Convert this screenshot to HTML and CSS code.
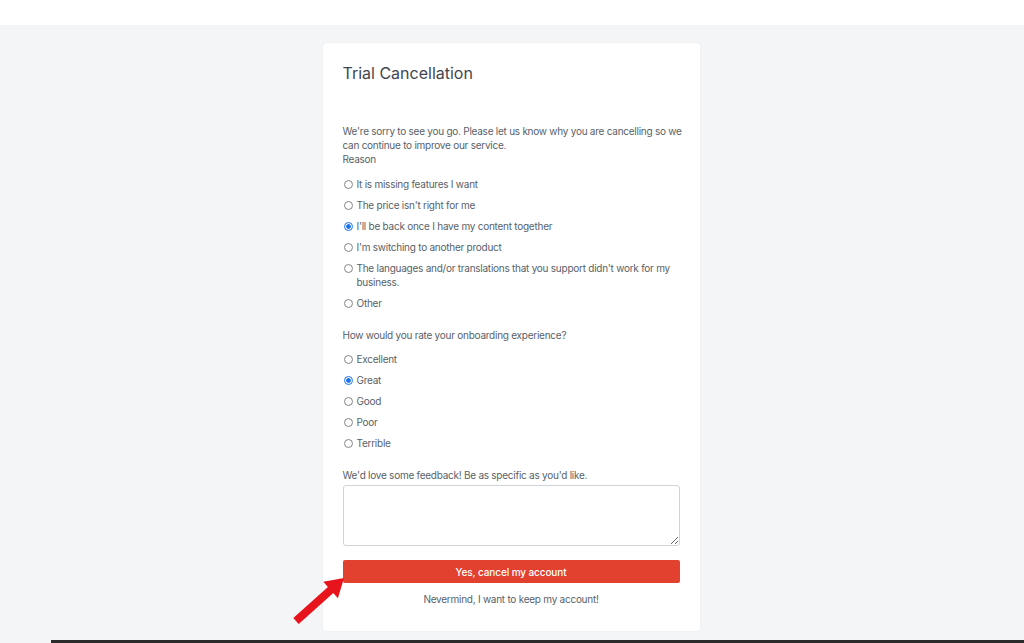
FILE: index.html
```html
<!DOCTYPE html>
<html lang="en">

<head>
    <meta charset="UTF-8">
    <meta name="viewport" content="width=device-width, initial-scale=1.0">
    <title>Trial Cancellation</title>
    <link rel="stylesheet" href="styles.css">
</head>

<body>
    <div class="topbar"></div>

    <div class="page">
        <form class="card">
            <h1 class="title">Trial Cancellation</h1>

            <p class="intro">We're sorry to see you go. Please let us know why you are cancelling so we can continue to improve our service.<br>Reason</p>

            <ul class="options first">
                <li><label><input type="radio" name="reason"><span>It is missing features I want</span></label></li>
                <li><label><input type="radio" name="reason"><span>The price isn't right for me</span></label></li>
                <li><label><input type="radio" name="reason" checked><span>I'll be back once I have my content together</span></label></li>
                <li><label><input type="radio" name="reason"><span>I'm switching to another product</span></label></li>
                <li><label><input type="radio" name="reason"><span>The languages and/or translations that you support didn't work for my business.</span></label></li>
                <li><label><input type="radio" name="reason"><span>Other</span></label></li>
            </ul>

            <p class="question">How would you rate your onboarding experience?</p>

            <ul class="options">
                <li><label><input type="radio" name="rating"><span>Excellent</span></label></li>
                <li><label><input type="radio" name="rating" checked><span>Great</span></label></li>
                <li><label><input type="radio" name="rating"><span>Good</span></label></li>
                <li><label><input type="radio" name="rating"><span>Poor</span></label></li>
                <li><label><input type="radio" name="rating"><span>Terrible</span></label></li>
            </ul>

            <p class="question">We'd love some feedback! Be as specific as you'd like.</p>
            <textarea class="feedback"></textarea>

            <button type="button" class="btn-cancel">Yes, cancel my account</button>
            <a href="#" class="keep">Nevermind, I want to keep my account!</a>
        </form>
    </div>

    <div class="bottombar"></div>

    <!-- annotation arrow -->
    <svg class="arrow" width="58" height="54" viewBox="0 0 58 54">
        <polygon points="54,4 47.9,24.2 43.3,19 8.7,50 3.3,44 37.9,13 33.3,7.8" fill="#e8141c" />
    </svg>
</body>

</html>
```

FILE: styles.css
```css
* {
    margin: 0;
    padding: 0;
    box-sizing: border-box;
}

ul {
    list-style: none;
}

html,
body {
    height: 100%;
}

body {
    position: relative;
    display: flex;
    flex-direction: column;
    background: #f4f5f7;
    font-family: Inter, "Liberation Sans", Arial, sans-serif;
    font-size: 10px;
    letter-spacing: -0.25px;
    line-height: 14px;
    color: #585f69;
    overflow: hidden;
}

.topbar {
    height: 25px;
    background: #fff;
    flex-shrink: 0;
}

.page {
    flex: 1;
    display: flex;
    justify-content: center;
    padding-top: 18px;
    padding-right: 2px;
}

.card {
    width: 377px;
    height: 588px;
    background: #fff;
    border-radius: 4px;
    box-shadow: 0 0 2px rgba(0, 0, 0, 0.06);
    padding: 20px 20px 25px;
    display: flex;
    flex-direction: column;
}

.title {
    font-size: 16px;
    line-height: 20px;
    font-weight: 400;
    letter-spacing: 0;
    color: #3f4650;
}

.intro {
    margin-top: 41px;
    margin-right: -6px;
}

.options {
    display: flex;
    flex-direction: column;
    gap: 7px;
    margin-top: 10px;
}

.options.first {
    margin-top: 11px;
}

.options label {
    display: flex;
    align-items: flex-start;
    gap: 4px;
    cursor: pointer;
}

.options input {
    appearance: none;
    -webkit-appearance: none;
    width: 9px;
    height: 9px;
    margin: 3px 0 0 1px;
    flex-shrink: 0;
    border: 1px solid #858585;
    border-radius: 50%;
    background: #fff;
}

.options input:checked {
    border-color: #1a73e8;
    background: radial-gradient(circle, #1a73e8 0, #1a73e8 42%, #fff 50%);
}

.question {
    margin-top: 18px;
}

.feedback {
    margin-top: 3px;
    width: 100%;
    height: 61px;
    border: 1px solid #cfd4da;
    border-radius: 3px;
    font-family: inherit;
    font-size: 10px;
    padding: 6px;
}

.btn-cancel {
    margin-top: 14px;
    height: 23px;
    width: 100%;
    border: none;
    border-radius: 2px;
    background: #e3412f;
    color: #fff;
    font-family: inherit;
    font-size: 10px;
    letter-spacing: -0.1px;
    font-weight: 500;
    cursor: pointer;
}

.keep {
    margin-top: 9px;
    text-align: center;
    color: #585f69;
    text-decoration: none;
}

.bottombar {
    height: 3px;
    margin-left: 51px;
    background: #2b2b2b;
    flex-shrink: 0;
}

.arrow {
    position: absolute;
    left: 290px;
    top: 574px;
}
```
